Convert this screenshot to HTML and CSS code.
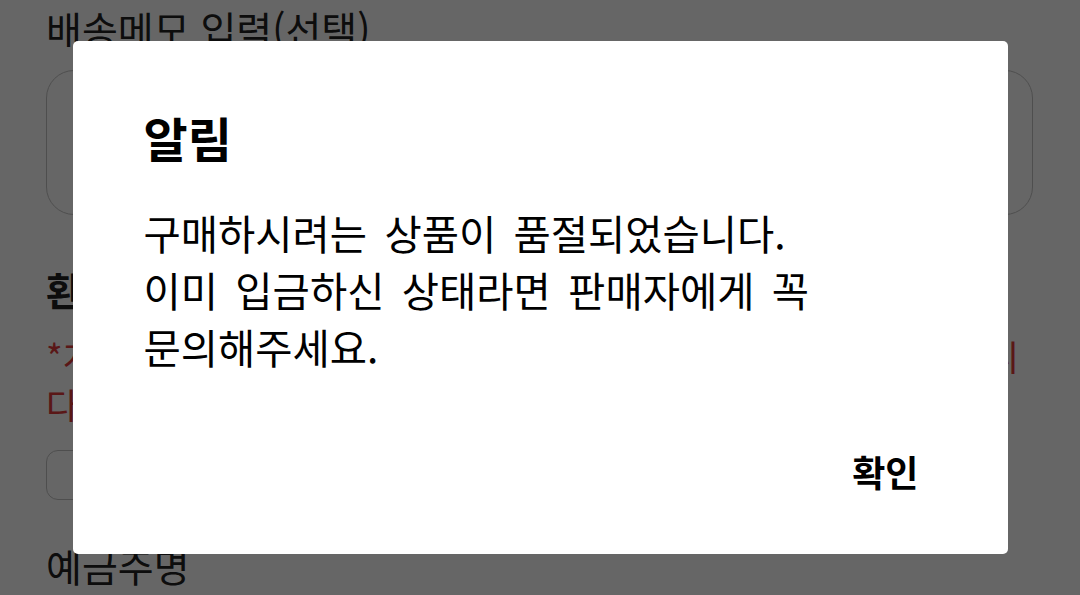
FILE: index.html
```html
<!DOCTYPE html>
<html lang="ko">
<head>
<meta charset="utf-8">
<title>알림</title>
<link rel="stylesheet" href="styles.css">
</head>
<body>
<main class="page">
  <div class="label first">배송메모 입력(선택)</div>
  <div class="memo-box"></div>
  <h2 class="section-title">환불계좌 정보</h2>
  <p class="notice">
    <span class="notice-line">*계좌번호를 정확하게 입력하지 않으시면 환불이 지연될 수 있습니</span>
    <span class="notice-line">다.</span>
  </p>
  <div class="text-input"></div>
  <div class="label">예금주명</div>
</main>

<div class="overlay">
  <div class="dialog" role="dialog" aria-labelledby="dlg-title">
    <h1 class="dialog-title" id="dlg-title">알림</h1>
    <p class="dialog-body">구매하시려는 상품이 품절되었습니다.<br>이미 입금하신 상태라면 판매자에게 꼭 문의해주세요.</p>
    <div class="dialog-actions">
      <button class="dialog-btn" type="button">확인</button>
    </div>
  </div>
</div>
</body>
</html>
```

FILE: styles.css
```css
html, body {
  margin: 0;
  padding: 0;
  height: 100%;
  overflow: hidden;
  background: #ffffff;
  font-family: "Noto Sans CJK KR", "Noto Sans", sans-serif;
}

.page {
  padding: 0 47px 0 46px;
  color: #222222;
}

.label {
  font-size: 39px;
  line-height: 48px;
  margin-top: 41px;
}

.label.first {
  margin-top: 4px;
}

.memo-box {
  margin-top: 18px;
  height: 143px;
  border: 1px solid #c4c4c4;
  border-radius: 28px;
}

.section-title {
  margin: 50px 0 0;
  font-size: 39px;
  line-height: 48px;
  font-weight: 700;
}

.notice {
  margin: 19px 0 0;
  color: #e03a3a;
  font-size: 35.7px;
  line-height: 48px;
}

.notice-line {
  display: block;
  white-space: nowrap;
}

.text-input {
  margin-top: 22px;
  height: 48px;
  width: 400px;
  border: 1px solid #c4c4c4;
  border-radius: 12px;
}

.overlay {
  position: fixed;
  inset: 0;
  background: rgba(0, 0, 0, 0.6);
  display: flex;
  align-items: center;
  justify-content: center;
}

.dialog {
  width: 935px;
  box-sizing: border-box;
  padding: 65px 89px 58px 71px;
  background: #ffffff;
  border-radius: 5px;
  color: #000000;
}

.dialog-title {
  margin: 0;
  font-size: 48px;
  line-height: 62px;
  font-weight: 700;
}

.dialog-body {
  margin: 36px 0 0;
  font-size: 40.5px;
  line-height: 57px;
  word-spacing: 6px;
  word-break: keep-all;
}

.dialog-actions {
  margin-top: 71px;
  display: flex;
  justify-content: flex-end;
}

.dialog-btn {
  border: 0;
  background: none;
  padding: 0;
  margin: 0;
  font-family: inherit;
  font-size: 36px;
  line-height: 50px;
  font-weight: 700;
  color: #000000;
}
```
